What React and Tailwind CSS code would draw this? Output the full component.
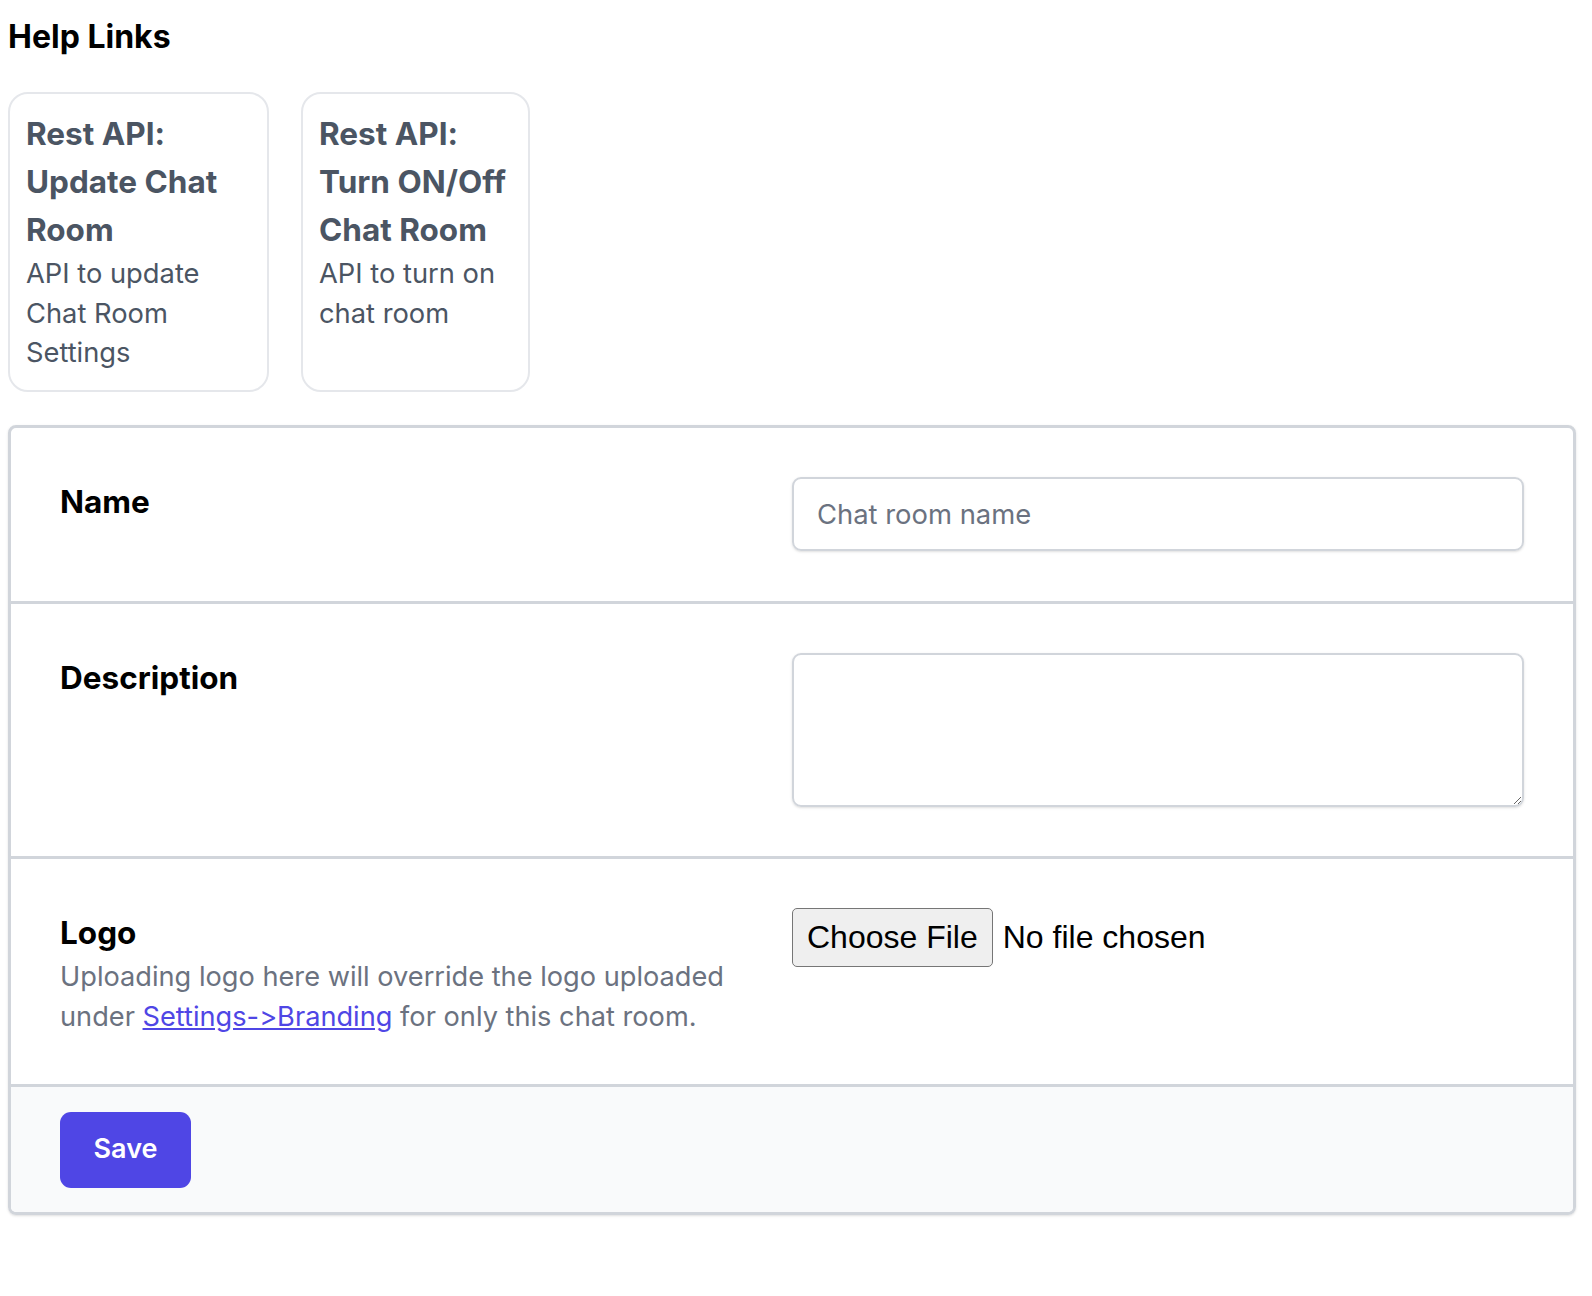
export default function App() {
  const cards = [
    {
      w: "w-[261px]",
      title: "Rest API: Update Chat Room",
      desc: "API to update Chat Room Settings",
    },
    {
      w: "w-[229px]",
      title: "Rest API: Turn ON/Off Chat Room",
      desc: "API to turn on chat room",
    },
  ];
  return (
    <div className="min-h-screen bg-white pl-2 pr-4 pt-[12px] pb-10 font-['Inter',sans-serif] text-black [font-feature-settings:'calt'_0,'liga'_0]">
      <h2 className="mb-[31px] text-[32px] font-bold leading-[49px]">Help Links</h2>
      <div className="flex items-stretch gap-[32px]">
        {cards.map((c) => (
          <a
            key={c.title}
            href="#"
            className={`${c.w} block rounded-[20px] border-2 border-[#e5e7eb] pl-[16px] pr-[17px] pt-[16px] pb-[17px]`}
          >
            <div className="text-[31.5px] font-bold leading-[48px] text-[#4b5563]">{c.title}</div>
            <div className="text-[27.3px] leading-[39.5px] text-[#4b5563]">{c.desc}</div>
          </a>
        ))}
      </div>

      <div className="mt-[33px] overflow-hidden rounded-[8px] border-[3px] border-[#d1d5db] shadow-sm">
        <div className="grid grid-cols-2 px-[49px] pt-[49px] pb-[50px]">
          <div className="text-[31.5px] font-bold leading-[49px]">Name</div>
          <div>
            <input
              type="text"
              placeholder="Chat room name"
              className="block h-[74px] w-full rounded-[9px] border-2 border-[#d1d5db] px-[23px] text-[27.4px] text-black shadow-sm outline-none placeholder:text-[#6b7280]"
            />
          </div>
        </div>

        <div className="grid grid-cols-2 border-t-[3px] border-[#d1d5db] px-[49px] pt-[49px] pb-[49px]">
          <div className="text-[31.5px] font-bold leading-[49px]">Description</div>
          <div>
            <textarea className="block h-[154px] w-full rounded-[9px] border-2 border-[#d1d5db] px-[23px] py-[12px] text-[27px] shadow-sm outline-none" />
          </div>
        </div>

        <div className="grid grid-cols-2 border-t-[3px] border-[#d1d5db] px-[49px] pt-[49px] pb-[46px]">
          <div>
            <div className="text-[31.5px] font-bold leading-[49px]">Logo</div>
            <p className="text-[27.2px] leading-[40.5px] text-[#6b7280]">
              Uploading logo here will override the logo uploaded under{" "}
              <a href="#" className="text-[#4f46e5] underline">
                Settings-&gt;Branding
              </a>{" "}
              for only this chat room.
            </p>
          </div>
          <div className="flex items-start font-['Liberation_Sans',Arial,sans-serif] text-[32px] text-black">
            <div className="flex items-center">
              <span className="flex h-[59px] items-center rounded-[5px] border-[1.5px] border-[#767676] bg-[#efefef] px-[14px]">
                Choose File
              </span>
              <span className="ml-[10px]">No file chosen</span>
            </div>
          </div>
        </div>

        <div className="border-t-[3px] border-[#d1d5db] bg-[#f9fafb] px-[49px] pt-[25px] pb-[24px]">
          <button className="h-[76px] w-[131px] rounded-[11px] bg-[#4f46e5] text-[27px] font-semibold text-white">
            Save
          </button>
        </div>
      </div>
    </div>
  );
}
